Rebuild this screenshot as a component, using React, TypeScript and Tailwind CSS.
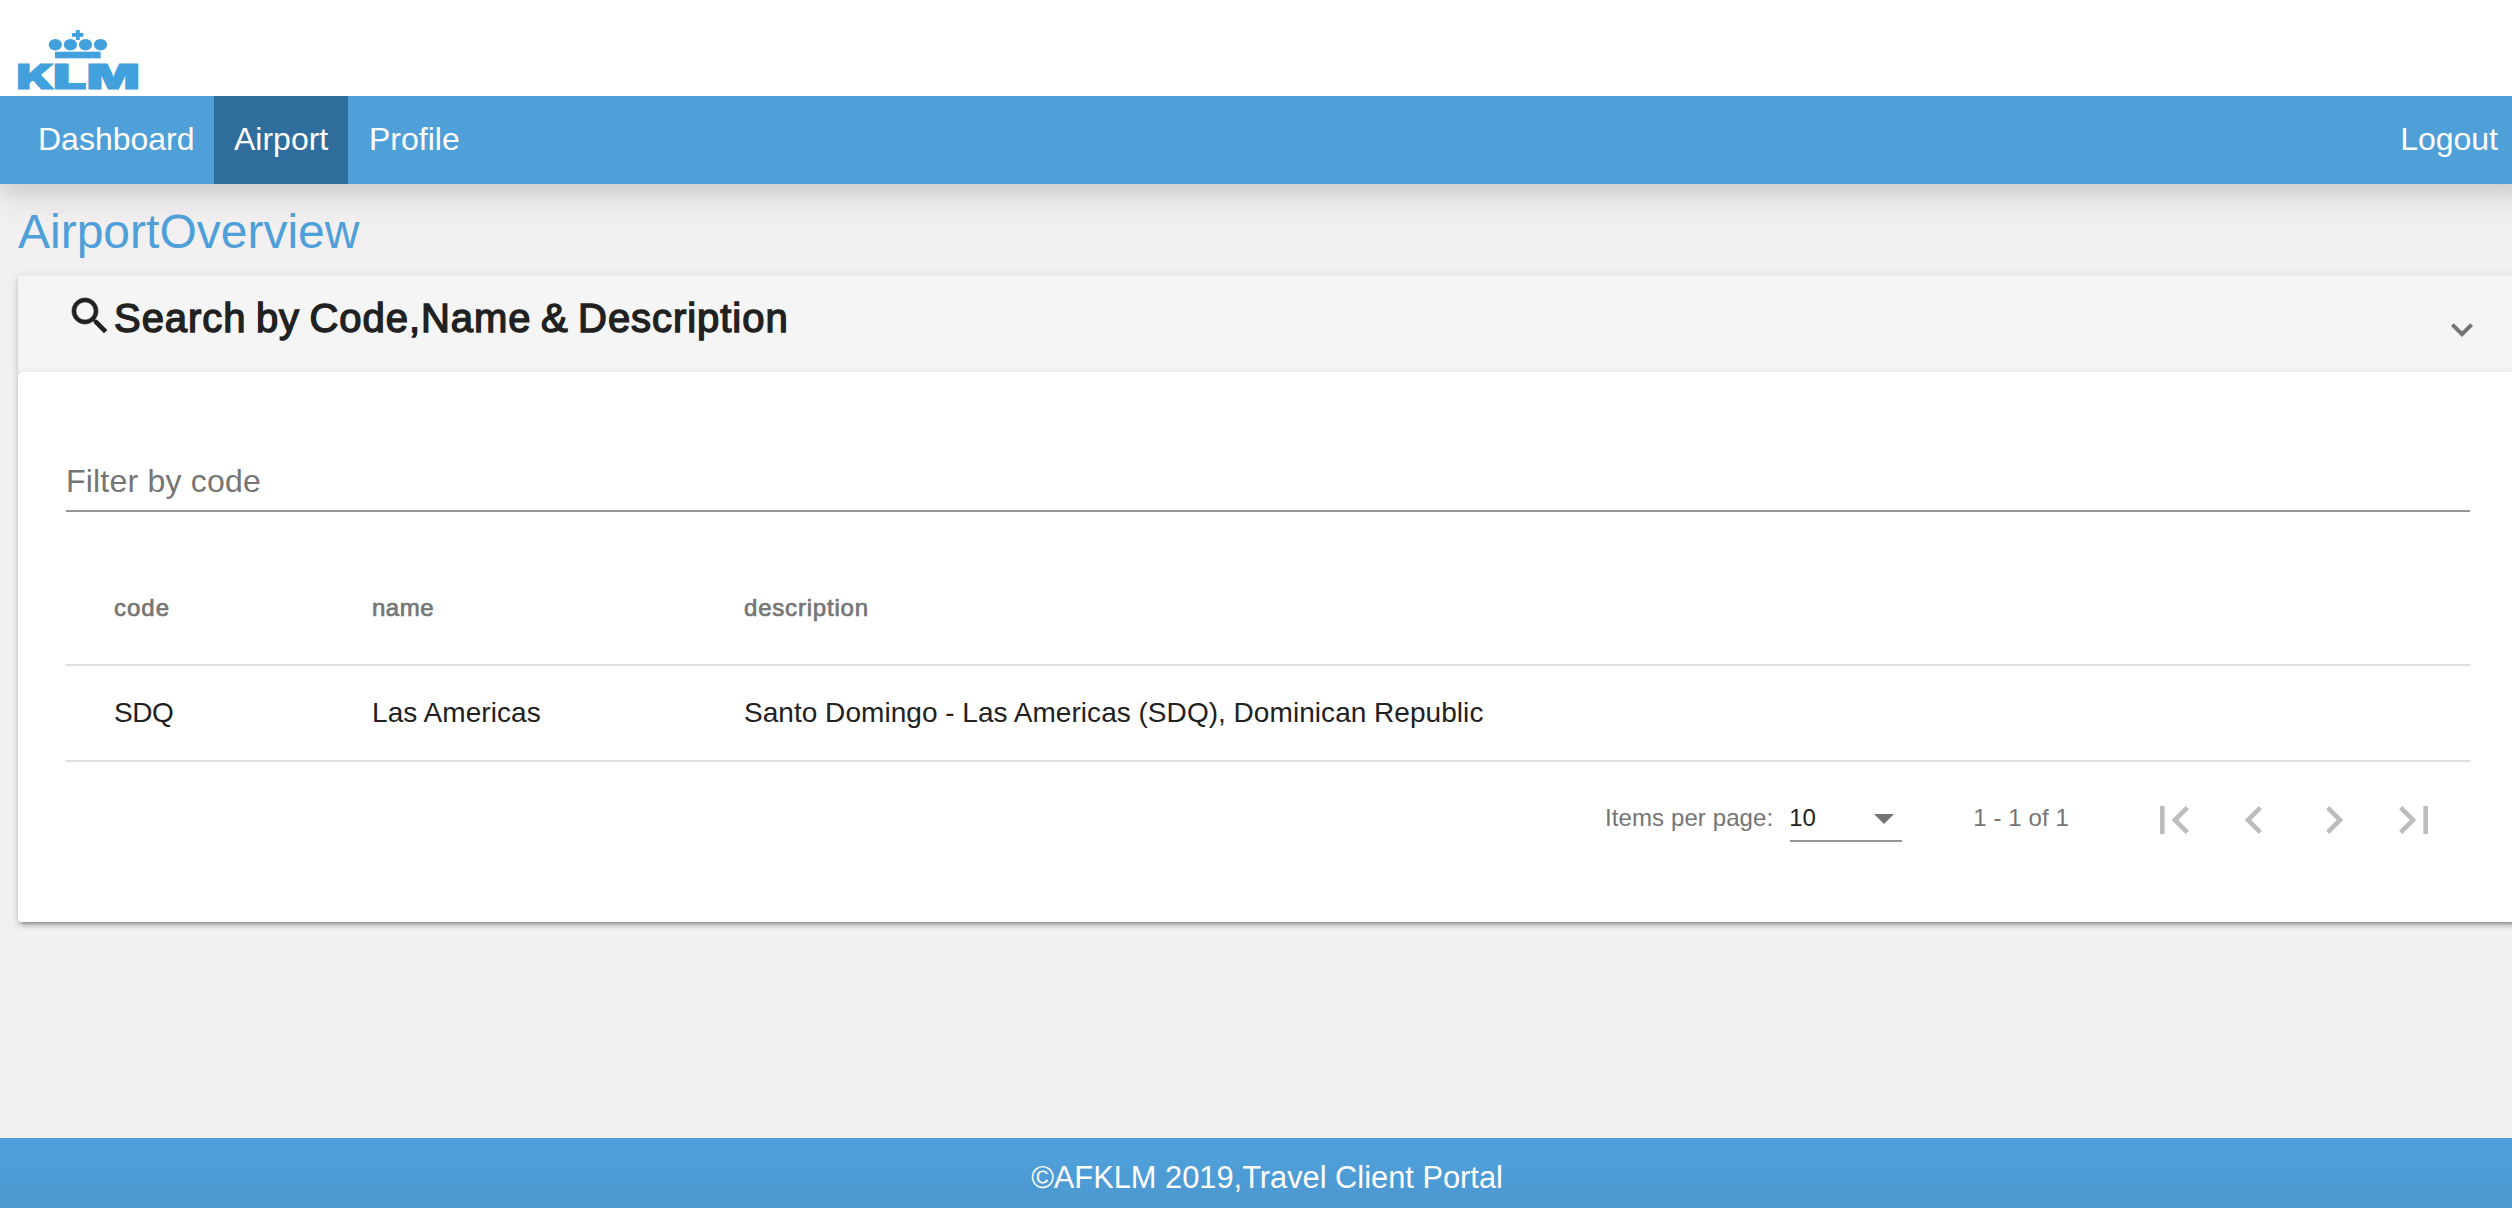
import React from "react";

const CARD_SHADOW =
  "shadow-[0_6px_2px_-4px_rgba(0,0,0,0.2),0_4px_4px_0_rgba(0,0,0,0.14),0_2px_10px_0_rgba(0,0,0,0.12)]";

const PAGER_ICONS = [
  { label: "First page", d: "M18.41 16.59L13.82 12l4.59-4.59L17 6l-6 6 6 6zM6 6h2v12H6z" },
  { label: "Previous page", d: "M15.41 7.41L14 6l-6 6 6 6 1.41-1.41L10.83 12z" },
  { label: "Next page", d: "M10 6L8.59 7.41 13.17 12l-4.58 4.59L10 18l6-6z" },
  { label: "Last page", d: "M5.59 7.41L10.18 12l-4.59 4.59L7 18l6-6-6-6zM16 6h2v12h-2z" },
];

function Logo() {
  return (
    <svg
      className="block h-[62px] w-[122px] overflow-visible fill-[#42a0dd] font-['Inter',sans-serif] font-black"
      viewBox="0 0 122 62"
      role="img"
      aria-label="KLM"
    >
      <rect x="58" y="0" width="3.8" height="10" />
      <rect x="54" y="3" width="11.4" height="3.8" />
      {[37.3, 52.4, 67.5, 82.5].map((cx) => (
        <ellipse key={cx} cx={cx} cy="14.7" rx="6.6" ry="5.8" />
      ))}
      <rect x="37" y="21.7" width="45.7" height="6.6" />
      <g className="stroke-[#42a0dd] stroke-[1.2]" fontSize="34.1">
        <text x="-1.6" y="59.4" textLength="37.6" lengthAdjust="spacingAndGlyphs">K</text>
        <text x="35" y="59.4" textLength="33.4" lengthAdjust="spacingAndGlyphs">L</text>
        <text x="68.8" y="59.4" textLength="53" lengthAdjust="spacingAndGlyphs">M</text>
      </g>
    </svg>
  );
}

function NavBar() {
  return (
    <nav className="flex h-[88px] items-stretch bg-[#4f9fd9] pl-[18px] text-[32px] leading-[86px] text-white shadow-[0_8px_16px_0_rgba(0,0,0,0.06),0_16px_32px_0_rgba(0,0,0,0.1)]">
      <a className="w-[196px] pl-5">Dashboard</a>
      <a className="w-[134px] bg-[#2f6d9d] pl-5">Airport</a>
      <a className="px-[21px]">Profile</a>
      <a className="ml-auto mr-9">Logout</a>
    </nav>
  );
}

function SearchHeader() {
  return (
    <div className={`flex h-24 items-start bg-[#f5f5f5] pl-12 pr-[45px] ${CARD_SHADOW}`}>
      <svg className="mt-4 size-12 fill-[#212121] stroke-[#212121] stroke-[0.3]" viewBox="0 0 24 24">
        <path d="M15.5 14h-.79l-.28-.27C15.41 12.59 16 11.11 16 9.5 16 5.91 13.09 3 9.5 3S3 5.91 3 9.5 5.91 16 9.5 16c1.61 0 3.09-.59 4.23-1.57l.27.28v.79l5 4.99L20.49 19l-4.99-5zm-6 0C7.01 14 5 11.99 5 9.5S7.01 5 9.5 5 14 7.01 14 9.5 11.99 14 9.5 14z" />
      </svg>
      <h2 className="mt-[18px] text-[40px] leading-[48px] tracking-[0.95px] text-[#212121] [-webkit-text-stroke:1.4px_#212121] [word-spacing:-2.6px]">
        Search by Code,Name &amp; Description
      </h2>
      <svg
        className="ml-auto mt-[47px] h-3.5 w-[22px] fill-none stroke-[#757575] stroke-[4]"
        viewBox="0 0 22 14"
      >
        <path d="M1.4 1.6L11 11.2L20.6 1.6" />
      </svg>
    </div>
  );
}

function AirportTable() {
  return (
    <table className="mt-[38px] w-full table-fixed border-separate border-spacing-0 text-left">
      <colgroup>
        <col className="w-[306px]" />
        <col className="w-[372px]" />
        <col />
      </colgroup>
      <thead>
        <tr className="h-[116px] text-2xl leading-[28px] text-[#757575] [-webkit-text-stroke:0.7px_#757575] *:border-b-2 *:border-[#e0e0e0] *:pt-0.5">
          <th className="pl-12 font-normal tracking-[1px]">code</th>
          <th className="font-normal tracking-[0.5px]">name</th>
          <th className="font-normal tracking-[0.8px]">description</th>
        </tr>
      </thead>
      <tbody>
        <tr className="h-24 text-[28px] leading-[32px] text-[#212121] *:border-b-2 *:border-[#e0e0e0]">
          <td className="pl-12 tracking-[-0.4px]">SDQ</td>
          <td className="tracking-[0.06px]">Las Americas</td>
          <td className="tracking-[0.06px] [word-spacing:-0.2px]">
            Santo Domingo - Las Americas (SDQ), Dominican Republic
          </td>
        </tr>
      </tbody>
    </table>
  );
}

function Paginator() {
  return (
    <div className="flex h-[112px] items-center justify-end pr-4 pt-0.5 text-2xl leading-[28px] text-[#757575]">
      <span className="mb-0.5 mr-[17px] tracking-[0.1px]">Items per page:</span>
      <div className="flex h-[46px] w-[112px] items-center justify-between border-b-2 border-[#949494] pr-2">
        <span className="-ml-px text-[#212121]">10</span>
        <span className="mt-0.5 border-x-[10px] border-t-[10px] border-x-transparent border-t-[#757575]" />
      </div>
      <span className="mb-0.5 ml-[71px] mr-[65px] tracking-[0.1px]">1 - 1 of 1</span>
      {PAGER_ICONS.map((icon) => (
        <button key={icon.label} aria-label={icon.label} className="mt-0.5 flex size-20 items-center justify-center">
          <svg className="size-14 fill-[#bdbdbd]" viewBox="0 0 24 24">
            <path d={icon.d} />
          </svg>
        </button>
      ))}
    </div>
  );
}

export default function App() {
  return (
    <div className="h-[1208px] w-full overflow-hidden bg-[#f2f0f1] font-['Liberation_Sans',Arial,sans-serif]">
      <div className="flex h-full w-[2534px] flex-col">
        <header className="relative z-10 h-24 bg-white pl-[18px] pt-[30px]">
          <Logo />
        </header>
        <NavBar />
        <main className="flex-1 pl-[18px]">
          <h1 className="h-[92px] pt-5 text-[48px] leading-[56px] text-[#4f9fd9]">AirportOverview</h1>
          <div className="w-[2500px]">
            <SearchHeader />
            <section className={`relative h-[550px] rounded bg-white px-12 pt-[88px] ${CARD_SHADOW}`}>
              <div className="h-[52px] border-b-2 border-[#949494] text-[32px] leading-[42px] tracking-[0.2px] text-[#757575]">
                Filter by code
              </div>
              <AirportTable />
              <Paginator />
            </section>
          </div>
        </main>
        <footer className="h-[70px] bg-linear-to-b from-[#4fa0da] from-20% to-[#4c97d0] text-center text-[30.8px] leading-[80px] text-white">
          ©AFKLM 2019,Travel Client Portal
        </footer>
      </div>
    </div>
  );
}
